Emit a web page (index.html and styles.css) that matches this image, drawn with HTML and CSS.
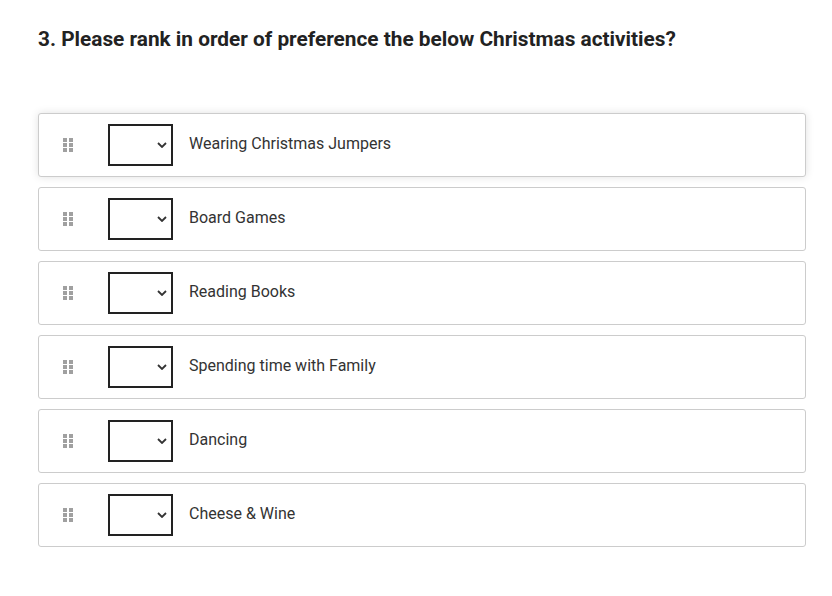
FILE: index.html
```html
<!DOCTYPE html>
<html lang="en">
<head>
    <meta charset="UTF-8">
    <meta name="viewport" content="width=device-width, initial-scale=1.0">
    <title>Ranking question</title>
    <link rel="stylesheet" href="styles.css">
</head>
<body>

<div class="question">
    <h2>3. Please rank in order of preference the below Christmas activities?</h2>

    <ul class="rank-list">
        <li class="rank-item dragging">
            <span class="handle"><i></i><i></i><i></i><i></i><i></i><i></i></span>
            <select class="rank-select"><option></option><option>1</option><option>2</option><option>3</option><option>4</option><option>5</option><option>6</option></select>
            <span class="label">Wearing Christmas Jumpers</span>
        </li>
        <li class="rank-item">
            <span class="handle"><i></i><i></i><i></i><i></i><i></i><i></i></span>
            <select class="rank-select"><option></option><option>1</option><option>2</option><option>3</option><option>4</option><option>5</option><option>6</option></select>
            <span class="label">Board Games</span>
        </li>
        <li class="rank-item">
            <span class="handle"><i></i><i></i><i></i><i></i><i></i><i></i></span>
            <select class="rank-select"><option></option><option>1</option><option>2</option><option>3</option><option>4</option><option>5</option><option>6</option></select>
            <span class="label">Reading Books</span>
        </li>
        <li class="rank-item">
            <span class="handle"><i></i><i></i><i></i><i></i><i></i><i></i></span>
            <select class="rank-select"><option></option><option>1</option><option>2</option><option>3</option><option>4</option><option>5</option><option>6</option></select>
            <span class="label">Spending time with Family</span>
        </li>
        <li class="rank-item">
            <span class="handle"><i></i><i></i><i></i><i></i><i></i><i></i></span>
            <select class="rank-select"><option></option><option>1</option><option>2</option><option>3</option><option>4</option><option>5</option><option>6</option></select>
            <span class="label">Dancing</span>
        </li>
        <li class="rank-item">
            <span class="handle"><i></i><i></i><i></i><i></i><i></i><i></i></span>
            <select class="rank-select"><option></option><option>1</option><option>2</option><option>3</option><option>4</option><option>5</option><option>6</option></select>
            <span class="label">Cheese &amp; Wine</span>
        </li>
    </ul>
</div>

</body>
</html>
```

FILE: styles.css
```css
body {
    font-family: Roboto, 'Liberation Sans', sans-serif;
    margin: 0;
    padding: 0;
    background: #ffffff;
    color: #333333;
}
.question {
    padding: 25px 26px 0 38px;
}
h2 {
    margin: 0 0 60px 0;
    font-size: 20.8px;
    font-weight: 700;
    color: #222222;
    line-height: 28px;
}
.rank-list {
    list-style: none;
    margin: 0;
    padding: 0;
    display: flex;
    flex-direction: column;
    gap: 10px;
}
.rank-item {
    display: flex;
    align-items: center;
    height: 62px;
    border: 1px solid #cccccc;
    border-radius: 3px;
    background: #ffffff;
}
.rank-item.dragging {
    box-shadow: 0 0 8px rgba(0, 0, 0, 0.12);
}
.handle {
    display: grid;
    grid-template-columns: 4px 4px;
    grid-auto-rows: 4px;
    column-gap: 2px;
    row-gap: 1px;
    margin-left: 24px;
    margin-right: 35px;
    cursor: grab;
}
.handle i {
    display: block;
    background: #a0a0a0;
}
.rank-select {
    width: 65px;
    height: 42px;
    border: 2px solid #222222;
    border-radius: 0;
    background: #ffffff url("data:image/svg+xml,%3Csvg xmlns='http://www.w3.org/2000/svg' width='10' height='6' viewBox='0 0 10 6'%3E%3Cpath d='M1 1l4 4 4-4' fill='none' stroke='%23333' stroke-width='1.8'/%3E%3C/svg%3E") no-repeat right 4px center;
    appearance: none;
    -webkit-appearance: none;
    font-size: 16px;
    margin-right: 16px;
}
.label {
    font-size: 16px;
    color: #333333;
    margin-bottom: 4px;
}
```
